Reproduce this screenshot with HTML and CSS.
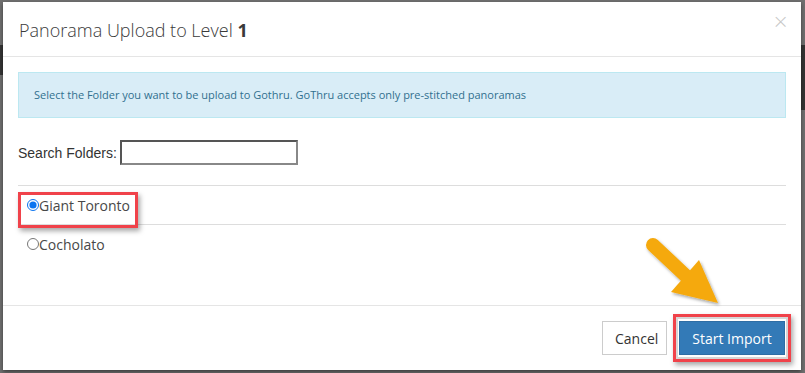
FILE: index.html
```html
<!DOCTYPE html>
<html>
<head>
<meta charset="utf-8">
<link rel="stylesheet" href="styles.css">
</head>
<body>
<div class="backdrop">
  <div class="band band-left"></div>
  <div class="band band-right"></div>
  <div class="modal">
    <div class="modal-header">
      <h4 class="modal-title">Panorama Upload to Level <b>1</b></h4>
      <span class="close">&times;</span>
    </div>
    <div class="modal-body">
      <div class="alert">Select the Folder you want to be upload to Gothru. GoThru accepts only pre-stitched panoramas</div>
      <div class="search-row">
        <label class="search-label" for="sf">Search Folders:</label>
        <input id="sf" class="search-input" type="text">
      </div>
      <ul class="folder-list">
        <li class="folder-item">
          <label class="folder-label highlighted"><input type="radio" name="folder" class="radio" checked>Giant Toronto</label>
        </li>
        <li class="folder-item">
          <label class="folder-label"><input type="radio" name="folder" class="radio">Cocholato</label>
        </li>
      </ul>
    </div>
    <div class="modal-footer">
      <button class="btn btn-default">Cancel</button>
      <button class="btn btn-primary highlighted-btn">Start Import</button>
    </div>
    <svg class="arrow" width="90" height="90" viewBox="0 0 90 90">
      <defs>
        <filter id="sh" x="-30%" y="-30%" width="160%" height="160%">
          <feDropShadow dx="1.5" dy="2" stdDeviation="1.5" flood-color="#000" flood-opacity="0.35"/>
        </filter>
      </defs>
      <g filter="url(#sh)" fill="#f5a90f">
        <line x1="12" y1="15" x2="46" y2="47" stroke="#f5a90f" stroke-width="14" stroke-linecap="round"/>
        <polygon points="30,62 58,30 77,73"/>
      </g>
    </svg>
  </div>
</div>
</body>
</html>
```
FILE: styles.css
```css
html, body {
  margin: 0;
  padding: 0;
}
body {
  width: 805px;
  height: 373px;
  overflow: hidden;
  background: #6f6f6f;
}
.backdrop {
  position: relative;
  width: 805px;
  height: 373px;
  padding: 2px 4px 3px 3px;
  box-sizing: border-box;
}
.band {
  position: absolute;
  background: #343434;
}
.band-left {
  left: 0;
  top: 45px;
  width: 4px;
  height: 30px;
}
.band-right {
  right: 0;
  top: 45px;
  width: 5px;
  height: 65px;
}
.modal {
  position: relative;
  width: 798px;
  height: 368px;
  background: #fff;
  box-shadow: 0 2px 4px rgba(0,0,0,0.45);
  display: flex;
  flex-direction: column;
  font-family: "Open Sans", sans-serif;
  color: #333;
}
.modal-header {
  height: 55px;
  box-sizing: border-box;
  border-bottom: 1px solid #e5e5e5;
  padding: 0 12px 0 16px;
  display: flex;
  align-items: center;
  justify-content: space-between;
}
.modal-title {
  margin: 0;
  font-size: 18px;
  font-weight: 300;
  color: #3a3a3a;
  padding-top: 2px;
}
.modal-title b {
  font-weight: 700;
}
.close {
  font-size: 20px;
  color: #c8c8c8;
  font-family: "DejaVu Sans", sans-serif;
  font-weight: 300;
  align-self: flex-start;
  margin-top: 7px;
  line-height: 24px;
}
.modal-body {
  flex: 1;
  padding: 15px 15px 0 15px;
  border-bottom: 1px solid #e5e5e5;
}
.alert {
  background: #d9edf7;
  border: 1px solid #bce8f1;
  color: #31708f;
  font-size: 11px;
  line-height: 14px;
  padding: 15px;
  margin-bottom: 22px;
}
.search-row {
  display: flex;
  align-items: center;
  height: 25px;
}
.search-label {
  font-family: "Liberation Sans", Arial, sans-serif;
  font-size: 14px;
  color: #333;
  margin-right: 3px;
}
.search-input {
  width: 178px;
  height: 25px;
  box-sizing: border-box;
  border: 2px solid #767676;
  border-top-color: #555;
  border-left-color: #555;
  border-right-color: #888;
  border-bottom-color: #888;
  padding: 1px 4px;
  margin: 0;
  outline: none;
}
.folder-list {
  list-style: none;
  margin: 20px 0 0 0;
  padding: 0;
}
.folder-item {
  border-top: 1px solid #dddddd;
  height: 38px;
  display: flex;
  align-items: center;
}
.folder-label {
  font-size: 14px;
  color: #484848;
  display: flex;
  align-items: center;
  position: relative;
  padding-left: 9px;
  height: 30px;
}
.radio {
  margin: 0;
  width: 12px;
  height: 12px;
  accent-color: #0a74f0;
}
.highlighted::after {
  content: "";
  position: absolute;
  left: 0;
  top: 2px;
  width: 120px;
  height: 36px;
  box-sizing: border-box;
  border: 3px solid #f0424a;
  box-shadow: 2px 3px 5px rgba(0,0,0,0.35);
}
.modal-footer {
  height: 64px;
  box-sizing: border-box;
  padding: 15px 16px 15px 15px;
  display: flex;
  justify-content: flex-end;
  align-items: flex-start;
  gap: 12px;
}
.btn {
  font-family: "Open Sans", sans-serif;
  font-size: 14px;
  height: 34px;
  box-sizing: border-box;
  border: 1px solid #ccc;
  border-radius: 0;
  padding: 0 12px;
  cursor: pointer;
}
.btn-default {
  width: 65px;
  background: #fff;
  color: #333;
}
.btn-primary {
  width: 106px;
  background: #337ab7;
  border-color: #2e6da4;
  color: #fff;
  position: relative;
}
.highlighted-btn::after {
  content: "";
  position: absolute;
  left: -7px;
  top: -8px;
  right: -7px;
  bottom: -8px;
  border: 3px solid #f0424a;
  box-shadow: inset 0 0 0 2px #d6d6d6, 2px 3px 5px rgba(0,0,0,0.35);
}
.arrow {
  position: absolute;
  left: 638px;
  top: 228px;
  overflow: visible;
}
```
